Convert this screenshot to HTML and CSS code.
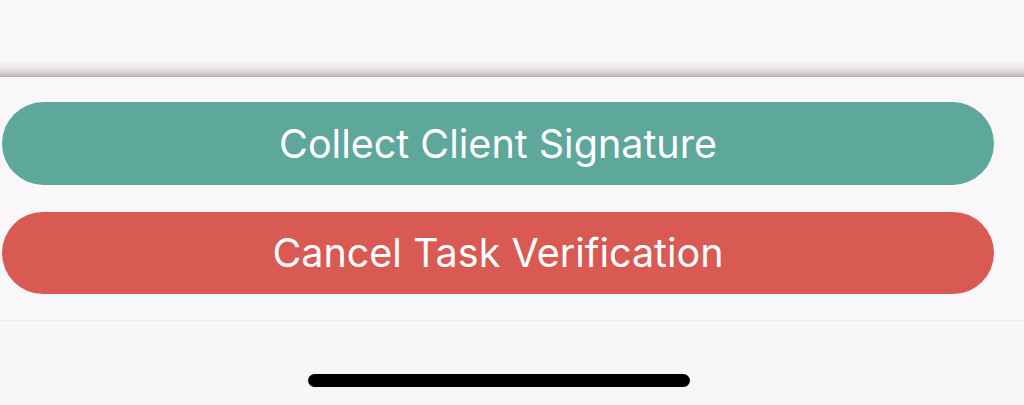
FILE: index.html
```html
<!DOCTYPE html>
<html>
<head>
<meta charset="utf-8">
<link rel="stylesheet" href="styles.css">
</head>
<body>
<div class="screen">
  <div class="top"></div>
  <div class="shade"></div>
  <div class="actions">
    <button class="btn btn-teal">Collect Client Signature</button>
    <button class="btn btn-red">Cancel Task Verification</button>
  </div>
  <div class="bottom">
    <div class="home-indicator"></div>
  </div>
</div>
</body>
</html>
```
FILE: styles.css
```css
html, body {
  margin: 0;
  padding: 0;
  background: #f9f7fa;
}
.screen {
  width: 1024px;
  height: 405px;
  display: flex;
  flex-direction: column;
  overflow: hidden;
}
.top {
  height: 61px;
}
.shade {
  height: 16px;
  background: linear-gradient(to bottom, rgba(249,247,250,0) 0%, #ece8eb 40%, #d6cdd0 75%, #bdb2b5 100%);
}
.actions {
  display: flex;
  flex-direction: column;
  gap: 27px;
  padding: 25px 30px 26px 2px;
  border-bottom: 1px solid #f0eef1;
}
.btn {
  border: none;
  height: 83px;
  border-radius: 42px;
  color: #ffffff;
  font-family: "Inter", "Noto Sans", sans-serif;
  font-size: 39.5px;
  font-weight: 400;
  padding: 0;
  margin: 0;
  display: flex;
  align-items: center;
  justify-content: center;
}
.btn-teal {
  background: #5da89b;
}
.btn-red {
  background: #d95953;
  height: 82px;
}
.bottom {
  flex: 1;
  display: flex;
  justify-content: center;
  padding-top: 53px;
  background: #f8f6f9;
}
.home-indicator {
  width: 382px;
  height: 13px;
  border-radius: 7px;
  background: #000000;
  margin-left: -26px;
}
```
